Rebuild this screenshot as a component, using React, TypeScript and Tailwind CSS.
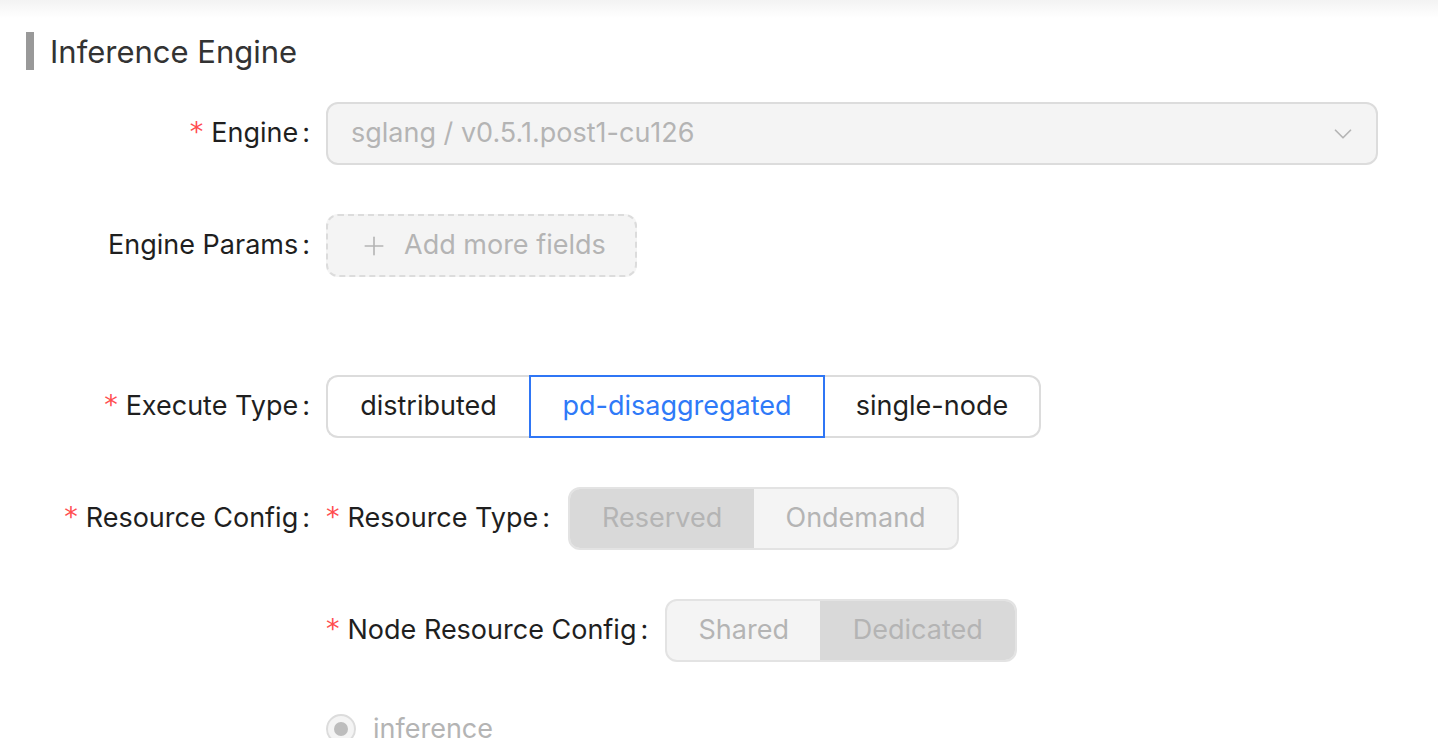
import React from 'react';
import { ChevronDown, Plus } from 'lucide-react';

const font = { fontFamily: 'Inter, "Noto Sans", sans-serif' };

function Label({ text, required, width }: { text: string; required?: boolean; width?: string }) {
  return (
    <div className={`flex items-center justify-end shrink-0 text-[27px] text-[#1f1f1f] ${width ?? ''}`}>
      {required && (
        <span className="text-[#ff4d4f] mr-[8px] text-[27px] leading-none -translate-y-[2px]" style={{ fontFamily: '"DejaVu Sans", sans-serif' }}>
          *
        </span>
      )}
      <span>{text}</span>
      <span className="ml-[4px] mr-[16px]">:</span>
    </div>
  );
}

function Segmented({ options, selected, widths }: { options: string[]; selected: number; widths: string[] }) {
  return (
    <div className="flex h-[63px] rounded-[12px] border-2 border-[#e3e3e3] bg-[#f4f4f4] overflow-hidden">
      {options.map((o, i) => (
        <div
          key={o}
          className={`flex items-center justify-center text-[27px] text-[#b4b4b4] ${widths[i]} ${i === selected ? 'bg-[#d9d9d9]' : ''}`}
        >
          {o}
        </div>
      ))}
    </div>
  );
}

export default function App() {
  return (
    <div className="w-[1438px] h-[738px] overflow-hidden bg-white relative" style={font}>
      <div className="h-[18px] bg-gradient-to-b from-[#f3f3f3] to-white" />

      {/* section title */}
      <div className="flex items-center mt-[14px] ml-[26px]">
        <div className="w-[8px] h-[38px] bg-[#999999]" />
        <div className="ml-[16px] text-[31px] text-[#333333] leading-none">Inference Engine</div>
      </div>

      <div className="mt-[32px] flex flex-col">
        {/* engine */}
        <div className="flex items-center h-[63px]">
          <Label text="Engine" required width="w-[326px]" />
          <div className="w-[1052px] h-[63px] rounded-[12px] border-2 border-[#dcdcdc] bg-[#f4f4f4] flex items-center justify-between pl-[23px] pr-[18px]">
            <span className="text-[27px] text-[#b4b4b4]">sglang / v0.5.1.post1-cu126</span>
            <ChevronDown size={30} strokeWidth={1.4} className="text-[#b5b5b5]" />
          </div>
        </div>

        {/* engine params */}
        <div className="flex items-center h-[63px] mt-[49px]">
          <Label text="Engine Params" width="w-[326px]" />
          <div className="w-[311px] h-[63px] rounded-[12px] border-2 border-dashed border-[#dcdcdc] bg-[#f4f4f4] flex items-center pl-[31px] text-[#b4b4b4]">
            <Plus size={30} strokeWidth={1.3} />
            <span className="ml-[15px] text-[27px]">Add more fields</span>
          </div>
        </div>

        {/* execute type */}
        <div className="flex items-center h-[63px] mt-[98px]">
          <Label text="Execute Type" required width="w-[326px]" />
          <div className="flex h-[63px] text-[27px]">
            <div className="w-[203px] flex items-center justify-center border-2 border-r-0 border-[#dcdcdc] rounded-l-[12px] text-[#1f1f1f]">
              distributed
            </div>
            <div className="w-[296px] flex items-center justify-center border-2 border-[#2f76f5] text-[#2f7af8]">
              pd-disaggregated
            </div>
            <div className="w-[216px] flex items-center justify-center border-2 border-l-0 border-[#dcdcdc] rounded-r-[12px] text-[#1f1f1f]">
              single-node
            </div>
          </div>
        </div>

        {/* resource config */}
        <div className="flex items-start mt-[49px]">
          <div className="h-[63px] flex items-center">
            <Label text="Resource Config" required width="w-[326px]" />
          </div>
          <div className="flex flex-col">
            <div className="flex items-center h-[63px]">
              <Label text="Resource Type" required />
              <div className="ml-[2px]">
                <Segmented options={['Reserved', 'Ondemand']} selected={0} widths={['w-[184px]', 'w-[203px]']} />
              </div>
            </div>
            <div className="flex items-center h-[63px] mt-[49px]">
              <Label text="Node Resource Config" required />
              <div className="ml-[1px]">
                <Segmented options={['Shared', 'Dedicated']} selected={1} widths={['w-[153px]', 'w-[195px]']} />
              </div>
            </div>
            <div className="flex items-center mt-[52px] h-[30px]">
              <div className="w-[30px] h-[30px] rounded-full border-2 border-[#dcdcdc] bg-[#f4f4f4] flex items-center justify-center">
                <div className="w-[14px] h-[14px] rounded-full bg-[#bdbdbd]" />
              </div>
              <span className="ml-[17px] text-[27px] text-[#b4b4b4]">inference</span>
            </div>
          </div>
        </div>
      </div>
    </div>
  );
}
